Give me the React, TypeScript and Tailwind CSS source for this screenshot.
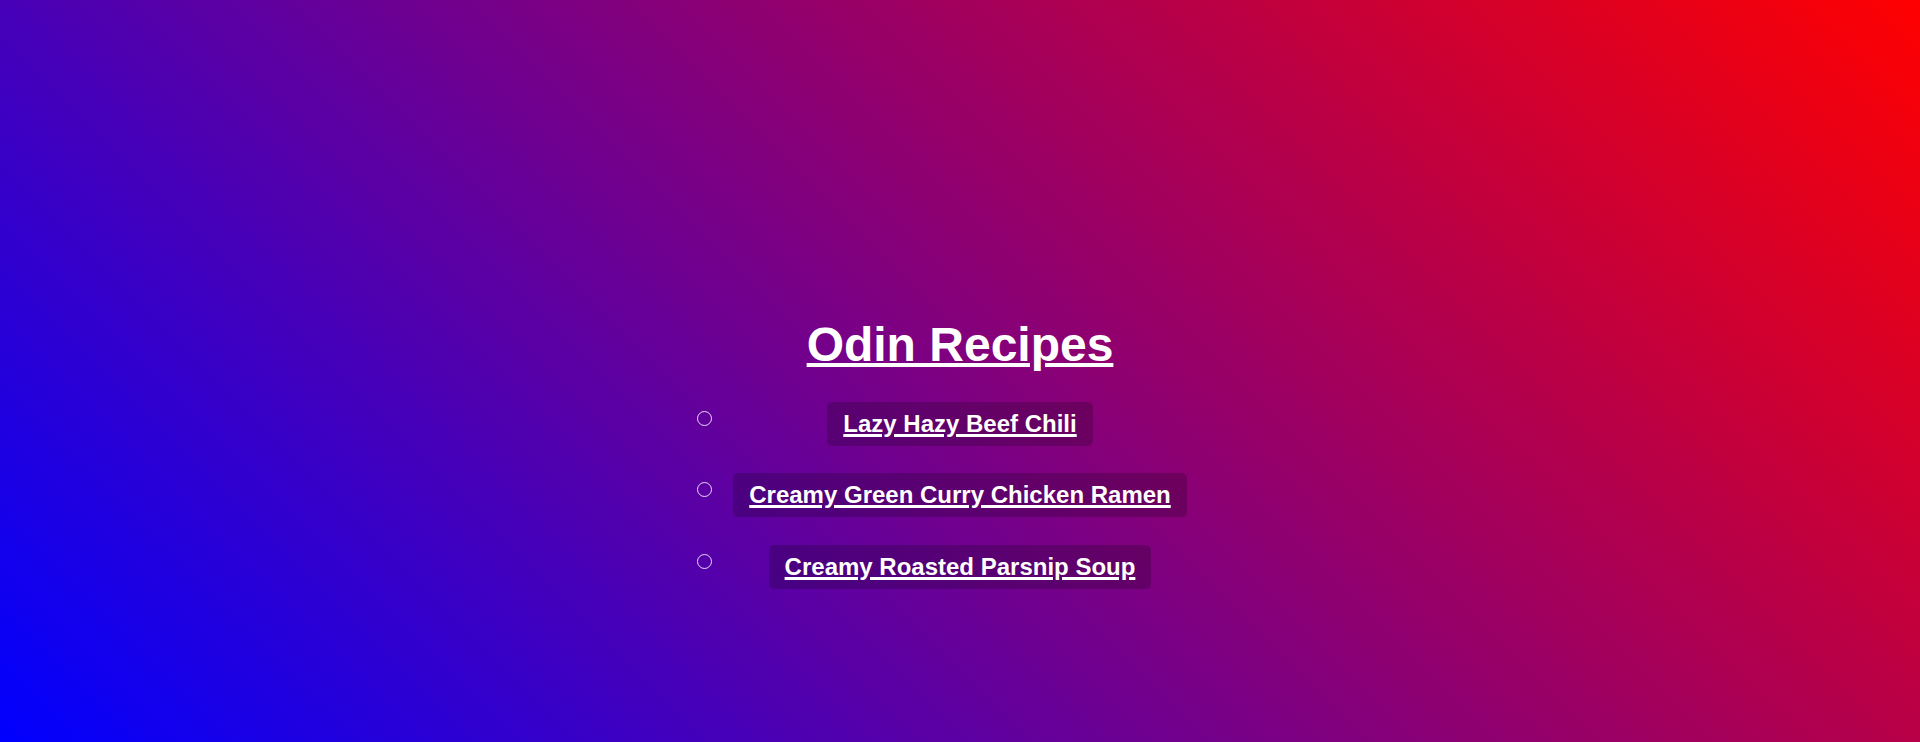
const recipes = [
  { title: "Lazy Hazy Beef Chili", href: "#lazy-hazy-beef-chili" },
  { title: "Creamy Green Curry Chicken Ramen", href: "#creamy-green-curry-chicken-ramen" },
  { title: "Creamy Roasted Parsnip Soup", href: "#creamy-roasted-parsnip-soup" },
];

export default function App() {
  return (
    <div className="min-h-screen w-full bg-[linear-gradient(45deg,#0000ff,#ff0000)] font-['Liberation_Sans',Arial,sans-serif] text-white">
      <div className="flex flex-col items-center pt-[317px]">
        <h1 className="text-[48px] font-bold leading-[normal] underline decoration-[4px]">Odin Recipes</h1>

        <ul className="mt-[30px] flex flex-col gap-[27.4px]">
          {recipes.map((recipe) => (
            <li key={recipe.href} className="grid w-[526px] grid-cols-[15px_1fr_15px] items-start">
              <span className="mt-[9px] h-[15px] w-[15px] rounded-full border border-white/85" />
              <div className="flex justify-center">
                <a
                  href={recipe.href}
                  className="rounded-[5px] bg-black/20 px-4 py-2 text-[24px] font-bold leading-[normal] text-white underline decoration-[3px]"
                >
                  {recipe.title}
                </a>
              </div>
              <span />
            </li>
          ))}
        </ul>
      </div>
    </div>
  );
}
